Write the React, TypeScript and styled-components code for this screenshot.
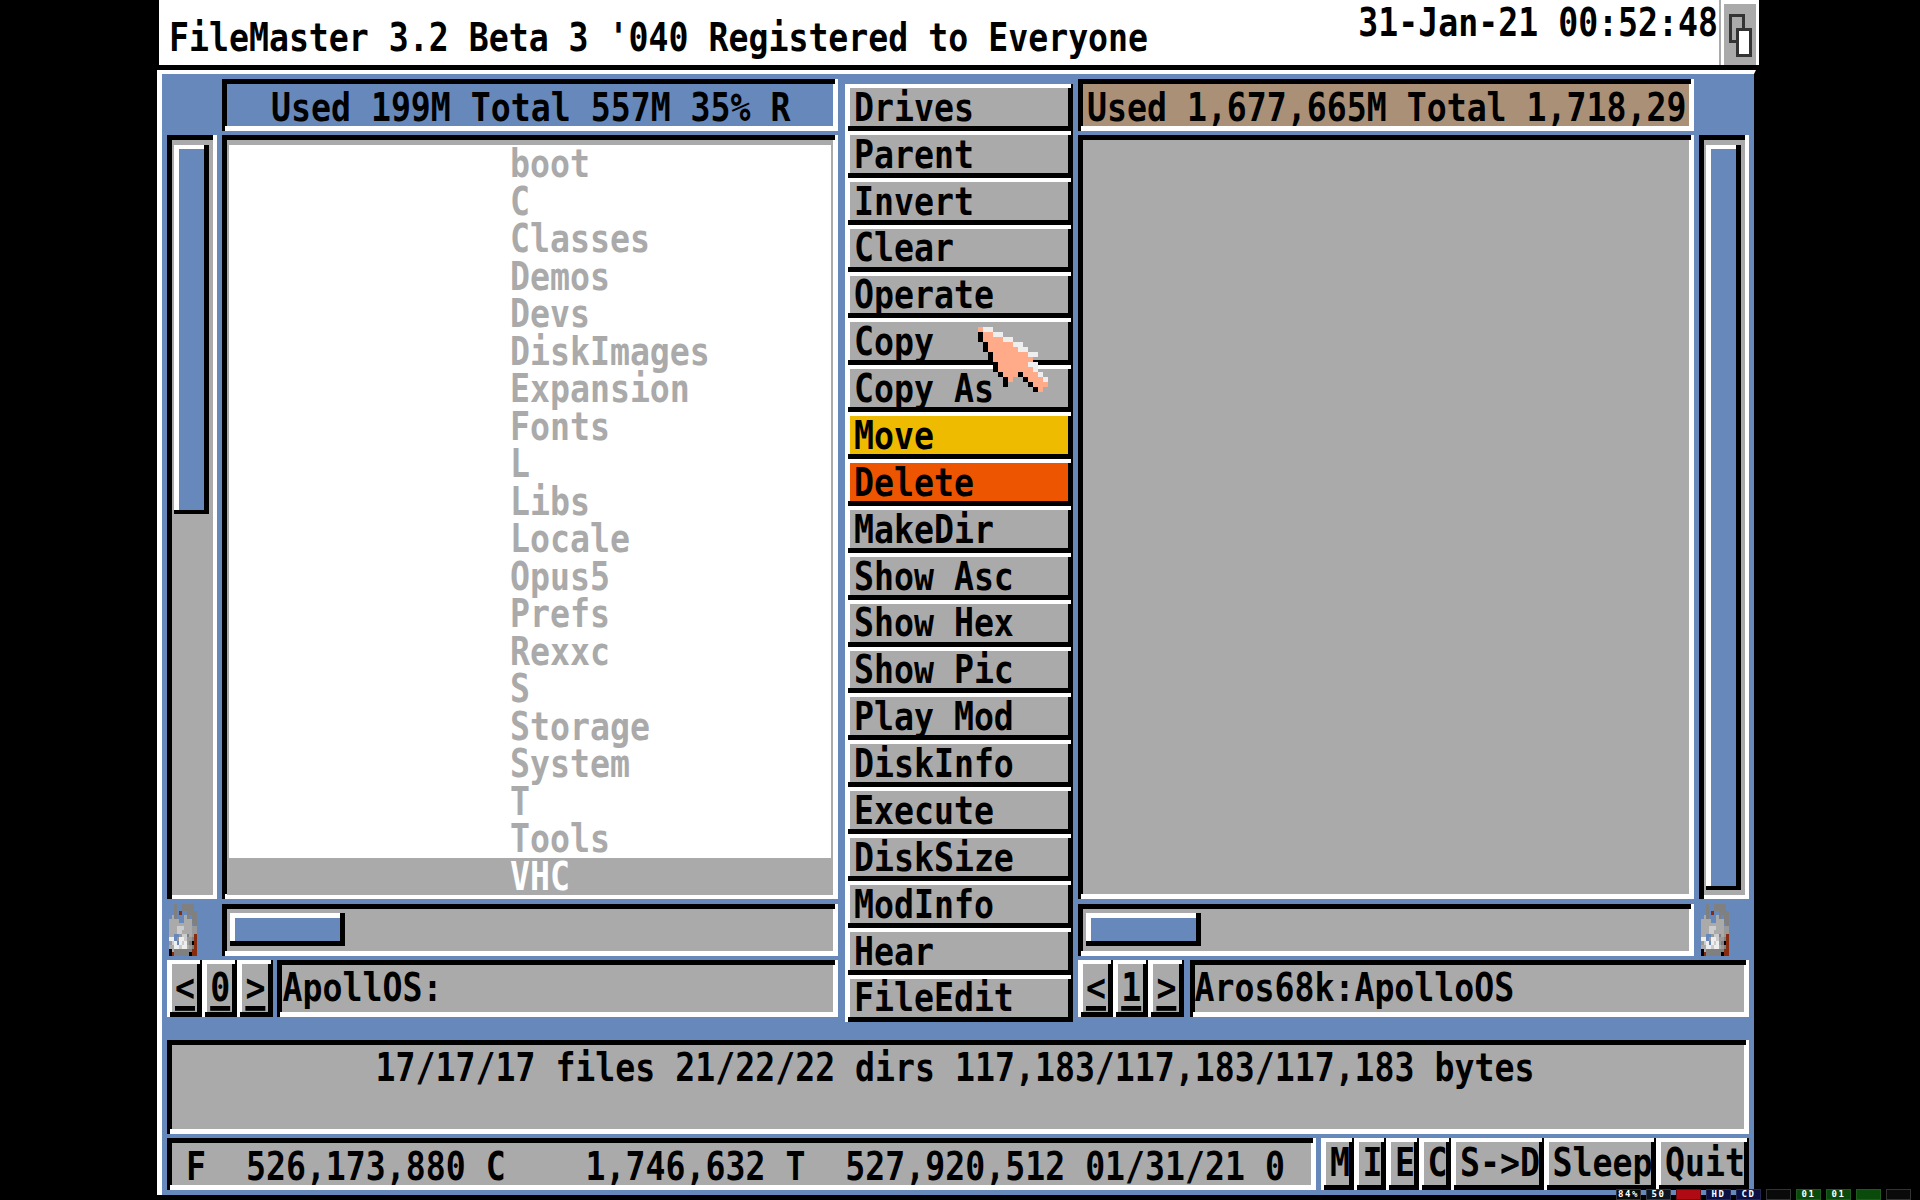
import * as React from 'react';
import styled, { createGlobalStyle, css } from 'styled-components';

const BLUE = '#6688bb';
const GRAY = '#aaaaaa';

const GlobalStyle = createGlobalStyle`
  html, body {
    margin: 0;
    padding: 0;
    background: #000000;
  }
`;

const raised = css`
  box-shadow: inset 3px 0 #ffffff, inset -2px 0 #000000, inset 0 -5px #000000, inset 5px 4px #ffffff,
    inset -5px 0 #000000;
`;

const sunken = css`
  box-shadow: inset 3px 0 #000000, inset -3px 0 #ffffff, inset 0 5px #000000, inset 0 -5px #ffffff,
    inset 5px 0 #000000, inset -5px 0 #ffffff;
`;

const Page = styled.div`
  position: relative;
  width: 1920px;
  height: 1200px;
  overflow: hidden;
  background: #000000;
`;

const Screen = styled.div`
  width: 1602px;
  height: 1200px;
  margin-left: 157px;
  display: flex;
  flex-direction: column;
`;

// Text is a narrow font stretched upward, as the hires/interlace Topaz is
const Txt = styled.span<{ $color?: string }>`
  display: inline-block;
  height: 30px;
  margin: 3.75px 0;
  font-family: 'DejaVu Sans Mono', 'Liberation Mono', monospace;
  font-weight: bold;
  font-size: 33.2px;
  line-height: 30px;
  white-space: pre;
  color: ${(p) => p.$color || '#000000'};
  transform: scaleY(1.2);
`;

const Key = styled(Txt)`
  text-decoration: underline;
  text-decoration-thickness: 4px;
  text-underline-offset: 4px;
`;

const TitleBar = styled.div`
  height: 65px;
  flex: none;
  display: flex;
  background: #ffffff;
  border-left: 2px solid #000000;
  margin-bottom: 5px;
`;

const TitleText = styled.div`
  flex: 1;
  padding: 19px 0 0 10px;
`;

const Clock = styled.div`
  padding: 4px 1px 0 0;
`;

const GadgetSlot = styled.div`
  width: 37px;
  margin-right: 3px;
  padding-left: 3px;
  box-sizing: border-box;
  border-left: 2px solid ${GRAY};
`;

const DepthGadget = styled.div`
  width: 32px;
  height: 61px;
  margin-top: 4px;
  background: ${GRAY};
`;

const Win = styled.div`
  flex: none;
  width: 1599px;
  height: 1125px;
  box-sizing: border-box;
  border-left: 5px solid #ffffff;
  border-top: 4px solid #ffffff;
  border-right: 2px solid #000000;
  background: ${BLUE};
  padding: 5px 5px 0;
`;

const Deck = styled.div`
  display: flex;
  gap: 7px;
  height: 938px;
`;

const Panel = styled.div<{ $mirror?: boolean }>`
  width: 671px;
  flex: none;
  display: grid;
  grid-template-columns: ${(p) => (p.$mirror ? '616px 50px' : '50px 616px')};
  grid-template-rows: 52px 764px 52px 57px;
  column-gap: 5px;
  row-gap: 4.33px;
`;

const InfoBox = styled.div<{ $bg: string; $col: number; $indent: number }>`
  ${sunken};
  grid-column: ${(p) => p.$col};
  grid-row: 1;
  background: ${(p) => p.$bg};
  padding: 10px 0 0 ${(p) => p.$indent}px;
  box-sizing: border-box;
  overflow: hidden;
  display: flex;
`;

const VScroll = styled.div<{ $col: number }>`
  grid-column: ${(p) => p.$col};
  grid-row: 2;
  background: ${GRAY};
  box-shadow: inset -4px 0 #ffffff, inset 5px 0 #000000, inset 0 5px #000000, inset 0 -4px #ffffff;
  padding: 10px 0 0 7px;
  box-sizing: border-box;
`;

const VKnob = styled.div<{ $height: number }>`
  width: 35px;
  height: ${(p) => p.$height}px;
  background: ${BLUE};
  box-shadow: inset 0 -4px #000000, inset -5px 0 #000000, inset 5px 4px #ffffff;
`;

const FileList = styled.div`
  ${sunken};
  grid-column: 2;
  grid-row: 2;
  background: ${GRAY};
  padding: 10px 5px 4px;
  box-sizing: border-box;
  display: flex;
  flex-direction: column;
`;

const FileRow = styled.div<{ $selected?: boolean }>`
  height: 37.5px;
  flex: none;
  margin: ${(p) => (p.$selected ? '0' : '0 2px')};
  padding-left: ${(p) => (p.$selected ? '283px' : '281px')};
  background: ${(p) => (p.$selected ? GRAY : '#ffffff')};
`;

const EmptyList = styled.div<{ $col: number }>`
  ${sunken};
  grid-column: ${(p) => p.$col};
  grid-row: 2;
  background: ${GRAY};
`;

const DriveIcon = styled.svg<{ $col: number }>`
  grid-column: ${(p) => p.$col};
  grid-row: 3;
  width: 28px;
  height: 52px;
  margin-left: 2px;
`;

const HScroll = styled.div<{ $col: number }>`
  ${sunken};
  grid-column: ${(p) => p.$col};
  grid-row: 3;
  background: ${GRAY};
  padding: 9px 0 0 8px;
  box-sizing: border-box;
`;

const HKnob = styled.div`
  width: 115px;
  height: 33px;
  background: ${BLUE};
  box-shadow: inset 0 -5px #000000, inset -5px 0 #000000, inset 5px 5px #ffffff;
`;

const PathRow = styled.div<{ $gap: number }>`
  grid-column: 1 / 3;
  grid-row: 4;
  display: flex;
  gap: ${(p) => p.$gap}px;
`;

const PathButtons = styled.div`
  display: flex;
  flex: none;
`;

const PathButton = styled.div`
  ${raised};
  width: 35.2px;
  box-sizing: border-box;
  background: ${GRAY};
  padding: 9px 0 0 8px;
`;

const PathBox = styled.div<{ $indent: number }>`
  ${sunken};
  flex: 1;
  background: ${GRAY};
  padding: 9px 0 0 ${(p) => p.$indent}px;
  box-sizing: border-box;
`;

const ButtonColumn = styled.div`
  width: 228px;
  margin-right: -2px;
  flex: none;
  padding-top: 5px;
  display: grid;
  grid-template-rows: repeat(20, 46.875px);
`;

const CommandButton = styled.div<{ $bg?: string }>`
  ${raised};
  background: ${(p) => p.$bg || GRAY};
  padding: 5px 0 0 9px;
  box-sizing: border-box;
`;

const StatusBox = styled.div`
  ${sunken};
  margin-top: 23px;
  height: 94px;
  background: ${GRAY};
  padding: 9px 6px 0 0;
  box-sizing: border-box;
  text-align: center;
`;

const BottomRow = styled.div`
  display: flex;
  gap: 5px;
  margin-top: 4px;
  height: 52px;
`;

const FreeBox = styled.div`
  ${sunken};
  width: 1149px;
  flex: none;
  background: ${GRAY};
  padding: 10px 0 0 19px;
  box-sizing: border-box;
`;

const SmallButtons = styled.div`
  flex: 1;
  display: grid;
  grid-template-columns: 32.5px 32.5px 32.5px 32.5px 92.5px 112.5px 92.5px;
`;

const SmallButton = styled.div`
  ${raised};
  background: ${GRAY};
  padding: 6px 0 0 9px;
  box-sizing: border-box;
  white-space: nowrap;
`;

const LedStrip = styled.div`
  position: absolute;
  right: 9px;
  bottom: 0;
  display: flex;
  gap: 5px;
`;

const Led = styled.div<{ $bg: string; $border: string }>`
  width: 25px;
  height: 11px;
  box-sizing: border-box;
  border: 1px solid ${(p) => p.$border};
  background: ${(p) => p.$bg};
  color: #ffffff;
  font-family: 'DejaVu Sans Mono', monospace;
  font-size: 9px;
  font-weight: bold;
  line-height: 9px;
  letter-spacing: 1.5px;
  text-align: center;
  white-space: pre;
`;

const Pointer = styled.svg`
  position: absolute;
  left: 978px;
  top: 327px;
  width: 70px;
  height: 65px;
`;

const leftFiles = [
  'boot', 'C', 'Classes', 'Demos', 'Devs', 'DiskImages', 'Expansion', 'Fonts', 'L', 'Libs',
  'Locale', 'Opus5', 'Prefs', 'Rexxc', 'S', 'Storage', 'System', 'T', 'Tools',
];

const commands = [
  'Drives', 'Parent', 'Invert', 'Clear', 'Operate', 'Copy', 'Copy As', 'Move', 'Delete', 'MakeDir',
  'Show Asc', 'Show Hex', 'Show Pic', 'Play Mod', 'DiskInfo', 'Execute', 'DiskSize', 'ModInfo', 'Hear', 'FileEdit',
];

const commandColors: Record<string, string> = {
  Move: '#eebb00',
  Delete: '#ee5500',
};

const leds = [
  { label: '84%', bg: '#0a0a0a', border: '#333333' },
  { label: '50', bg: '#0c1420', border: '#333a44' },
  { label: '', bg: '#b00a14', border: '#660a10' },
  { label: 'HD', bg: '#0a0f44', border: '#222650' },
  { label: 'CD', bg: '#0a0f44', border: '#222650' },
  { label: '', bg: '#0a0a0a', border: '#333333' },
  { label: '01', bg: '#0a4a0a', border: '#1f5a1f' },
  { label: '01', bg: '#0a4a0a', border: '#1f5a1f' },
  { label: '', bg: '#0a4a0a', border: '#1f5a1f' },
  { label: '', bg: '#0a0a0a', border: '#333333' },
];

const smallButtons = ['M', 'I', 'E', 'C', 'S->D', 'Sleep', 'Quit'];

const pointerRows = [
  'sww',
  'ksswW',
  'kssssww',
  '.ksssssww',
  '.kssssssww',
  '..ksssssssww',
  '..kssssssss',
  '...kssssssww',
  '...ksssssssw',
  '....ksssksssw',
  '.....ks..ksssw',
  '.....k....ksss',
  '...........ks',
];

const iconRows = [
  '..d..ddddd.',
  '..d..ddddd.',
  '..d.r..dddd',
  '.gd...gd.dd',
  'gggg..gggdd',
  'ggggggggg.d',
  'ggglllgggmm',
  'gggllggggmm',
  'ggbbmlldgmr',
  'wwbmwwlmmdr',
  'mlwbwlwmdkr',
  'ggwwlwwgmdr',
  'kgdddddddrr',
  'krddddddkrr',
];

const pixelColors: Record<string, string> = {
  s: '#ffaa88',
  w: '#eeeeee',
  W: '#eeeeee',
  k: '#000000',
  g: '#aaaaaa',
  d: '#808080',
  l: '#cccccc',
  m: '#999999',
  b: '#6688bb',
  r: '#882c10',
};

const PixelArt: React.FC<{ rows: string[] }> = ({ rows }) => (
  <>
    {rows.map((row, y) =>
      row.split('').map((c, x) =>
        c === '.' ? null : <rect key={`${x}-${y}`} x={x} y={y} width={1} height={1} fill={pixelColors[c]} />,
      ),
    )}
  </>
);

const Drive: React.FC<{ col: number }> = ({ col }) => (
  <DriveIcon $col={col} viewBox="0 0 11 14" preserveAspectRatio="none" shapeRendering="crispEdges">
    <PixelArt rows={iconRows} />
  </DriveIcon>
);

const App: React.FC = () => (
  <Page>
    <GlobalStyle />
    <Screen>
      <TitleBar>
        <TitleText>
          <Txt>FileMaster 3.2 Beta 3 '040 Registered to Everyone</Txt>
        </TitleText>
        <Clock>
          <Txt>31-Jan-21 00:52:48</Txt>
        </Clock>
        <GadgetSlot>
          <DepthGadget>
            <svg width="32" height="61" viewBox="0 0 32 61" shapeRendering="crispEdges">
              <rect x="6.5" y="11.5" width="13" height="26" fill="none" stroke="#333333" strokeWidth="3" />
              <rect x="13.5" y="25.5" width="13" height="26" fill="#ffffff" stroke="#333333" strokeWidth="3" />
            </svg>
          </DepthGadget>
        </GadgetSlot>
      </TitleBar>
      <Win>
        <Deck>
          <Panel>
            <InfoBox $bg={BLUE} $col={2} $indent={49}>
              <Txt>Used 199M Total 557M 35% R</Txt>
            </InfoBox>
            <VScroll $col={1}>
              <VKnob $height={369} />
            </VScroll>
            <FileList>
              {leftFiles.map((name) => (
                <FileRow key={name}>
                  <Txt $color={GRAY}>{name}</Txt>
                </FileRow>
              ))}
              <FileRow $selected>
                <Txt $color="#ffffff">VHC</Txt>
              </FileRow>
            </FileList>
            <Drive col={1} />
            <HScroll $col={2}>
              <HKnob />
            </HScroll>
            <PathRow $gap={4}>
              <PathButtons>
                <PathButton><Key>&lt;</Key></PathButton>
                <PathButton><Key>0</Key></PathButton>
                <PathButton><Key>&gt;</Key></PathButton>
              </PathButtons>
              <PathBox $indent={6}>
                <Txt>ApollOS:</Txt>
              </PathBox>
            </PathRow>
          </Panel>
          <ButtonColumn>
            {commands.map((label) => (
              <CommandButton key={label} $bg={commandColors[label]}>
                <Txt>{label}</Txt>
              </CommandButton>
            ))}
          </ButtonColumn>
          <Panel $mirror>
            <InfoBox $bg="#aa9077" $col={1} $indent={9}>
              <Txt>Used 1,677,665M Total 1,718,29</Txt>
            </InfoBox>
            <EmptyList $col={1} />
            <VScroll $col={2}>
              <VKnob $height={745} />
            </VScroll>
            <HScroll $col={1}>
              <HKnob />
            </HScroll>
            <Drive col={2} />
            <PathRow $gap={6}>
              <PathButtons>
                <PathButton><Key>&lt;</Key></PathButton>
                <PathButton><Key>1</Key></PathButton>
                <PathButton><Key>&gt;</Key></PathButton>
              </PathButtons>
              <PathBox $indent={5}>
                <Txt>Aros68k:ApolloOS</Txt>
              </PathBox>
            </PathRow>
          </Panel>
        </Deck>
        <StatusBox>
          <Txt>17/17/17 files 21/22/22 dirs 117,183/117,183/117,183 bytes</Txt>
        </StatusBox>
        <BottomRow>
          <FreeBox>
            <Txt>F  526,173,880 C    1,746,632 T  527,920,512 01/31/21 0</Txt>
          </FreeBox>
          <SmallButtons>
            {smallButtons.map((label) => (
              <SmallButton key={label}>
                <Txt>{label}</Txt>
              </SmallButton>
            ))}
          </SmallButtons>
        </BottomRow>
      </Win>
    </Screen>
    <Pointer viewBox="0 0 14 13" shapeRendering="crispEdges">
      <PixelArt rows={pointerRows} />
    </Pointer>
    <LedStrip>
      {leds.map((led, i) => (
        <Led key={i} $bg={led.bg} $border={led.border}>{led.label}</Led>
      ))}
    </LedStrip>
  </Page>
);

export default App;
